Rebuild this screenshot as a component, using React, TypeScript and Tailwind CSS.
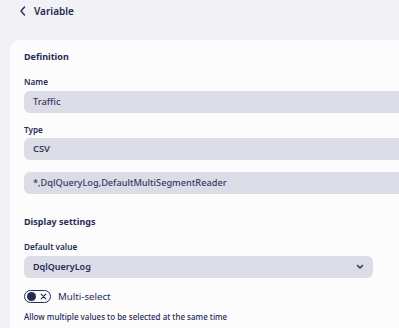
export default function App() {
  return (
    <div className="w-[399px] h-[328px] overflow-hidden bg-[#f1f1f6] text-[#272a52] font-['Noto_Sans',sans-serif]">
      {/* Header */}
      <div className="flex items-center h-[22px] pl-[19px] gap-[7px]">
        <svg width="8" height="10" viewBox="0 0 8 10" fill="none" stroke="currentColor" strokeWidth="1.4" strokeLinecap="round" strokeLinejoin="round">
          <path d="M5.5 1 L2 5 L5.5 9" />
        </svg>
        <span className="text-[10px] font-semibold leading-none">Variable</span>
      </div>

      {/* Card */}
      <div className="ml-[10px] mt-[18px] w-[420px] h-[300px] rounded-tl-[10px] bg-[#fcfcfd] pl-[14px] pt-[9px] flex flex-col">
        <h2 className="text-[9px] font-bold leading-[16px]">Definition</h2>

        <label className="mt-[10px] text-[8.2px] font-semibold leading-[14px]">Name</label>
        <div className="mt-[2px] h-[22px] rounded-l-[6px] bg-[#dcdce7] flex items-center pl-[9px] text-[9.3px] font-medium text-[#363960]">
          Traffic
        </div>

        <label className="mt-[10px] text-[8.2px] font-semibold leading-[14px]">Type</label>
        <div className="mt-[1px] h-[22px] rounded-l-[6px] bg-[#dcdce7] flex items-center pl-[9px] text-[9.3px] font-semibold text-[#363960]">
          CSV
        </div>

        <div className="mt-[12px] h-[22px] rounded-l-[6px] bg-[#dcdce7] flex items-center pl-[9px] text-[9.2px] font-medium text-[#363960]">
          *,DqlQueryLog,DefaultMultiSegmentReader
        </div>

        <h2 className="mt-[20px] text-[9px] font-bold leading-[16px]">Display settings</h2>

        <label className="mt-[10px] text-[8.2px] font-semibold leading-[14px]">Default value</label>
        <div className="mt-[2px] h-[22px] w-[349px] rounded-[6px] bg-[#dcdce7] flex items-center justify-between pl-[9px] pr-[9px] text-[9px] font-semibold">
          <span>DqlQueryLog</span>
          <svg width="8" height="6" viewBox="0 0 8 6" fill="none" stroke="currentColor" strokeWidth="1.4" strokeLinecap="round" strokeLinejoin="round">
            <path d="M1.5 1.5 L4 4 L6.5 1.5" />
          </svg>
        </div>

        <div className="mt-[12px] flex items-center gap-[7px]">
          <div className="w-[27px] h-[13px] rounded-full border border-[#272a52] flex items-center justify-between pl-[2px] pr-[3px]">
            <div className="w-[9px] h-[9px] rounded-full bg-[#272a52]" />
            <svg width="7" height="7" viewBox="0 0 7 7" stroke="currentColor" strokeWidth="1.1" strokeLinecap="round">
              <path d="M1.2 1.2 L5.8 5.8 M5.8 1.2 L1.2 5.8" />
            </svg>
          </div>
          <span className="text-[9.7px] leading-[13px]">Multi-select</span>
        </div>

        <p className="mt-[7px] text-[8px] font-medium leading-[14px]">Allow multiple values to be selected at the same time</p>
      </div>
    </div>
  );
}
